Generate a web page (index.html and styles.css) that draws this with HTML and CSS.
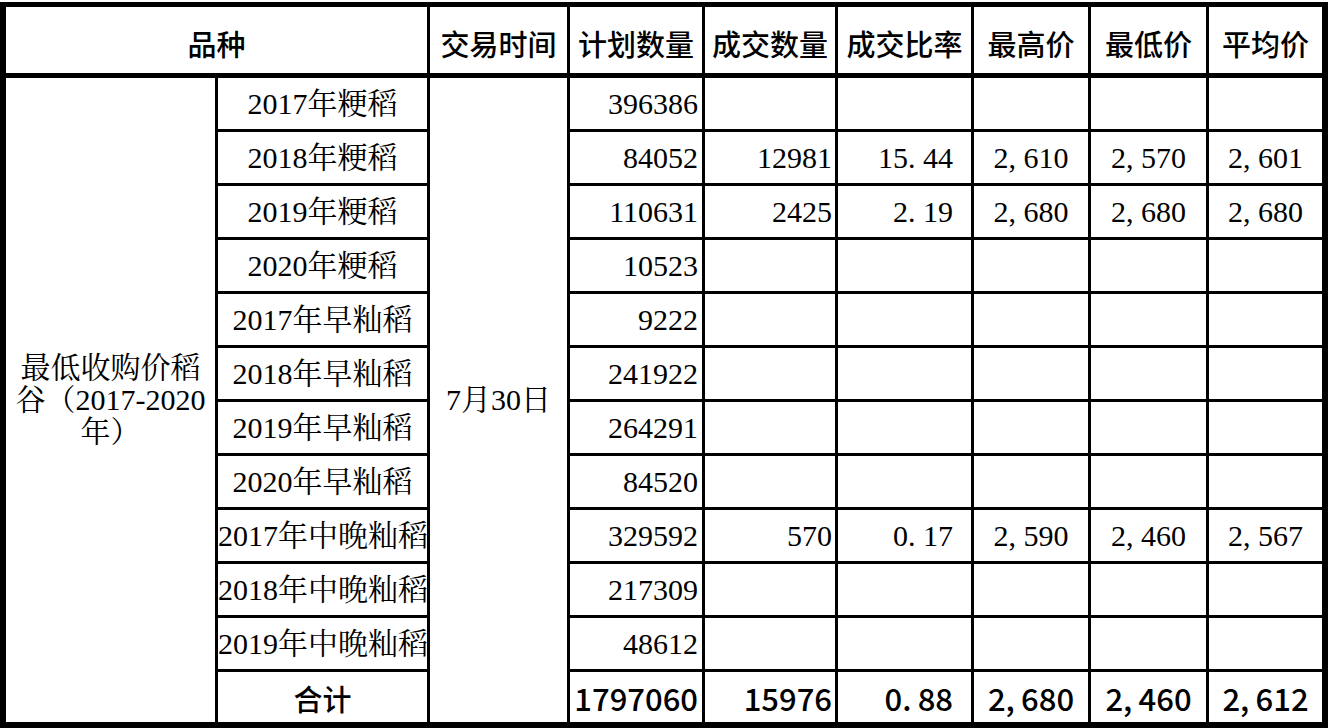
FILE: index.html
```html
<!DOCTYPE html>
<html>
<head>
<meta charset="utf-8">
<title>最低收购价稻谷交易结果</title>
<link rel="stylesheet" href="styles.css">
</head>
<body>
<table class="grid">
  <colgroup>
    <col class="w1"><col class="w2"><col class="w3"><col class="w4"><col class="w5"><col class="w6"><col class="w7"><col class="w8"><col class="w9">
  </colgroup>
  <tr class="hr">
    <th colspan="2">品种</th>
    <th>交易时间</th>
    <th>计划数量</th>
    <th>成交数量</th>
    <th>成交比率</th>
    <th>最高价</th>
    <th>最低价</th>
    <th class="last">平均价</th>
  </tr>
  <tr class="br">
    <td rowspan="12" class="span cat">最低收购价稻<br>谷（2017-2020<br>年）</td>
    <td class="name">2017年粳稻</td>
    <td rowspan="12" class="span date">7月30日</td>
    <td class="plan">396386</td>
    <td class="deal"></td>
    <td class="rate"></td>
    <td class="price"></td>
    <td class="price"></td>
    <td class="price last"></td>
  </tr>
  <tr class="br">
    <td class="name">2018年粳稻</td>
    <td class="plan">84052</td>
    <td class="deal">12981</td>
    <td class="rate">15<span class="wd">.</span>44</td>
    <td class="price">2<span class="wd">,</span>610</td>
    <td class="price">2<span class="wd">,</span>570</td>
    <td class="price last">2<span class="wd">,</span>601</td>
  </tr>
  <tr class="br">
    <td class="name">2019年粳稻</td>
    <td class="plan">110631</td>
    <td class="deal">2425</td>
    <td class="rate">2<span class="wd">.</span>19</td>
    <td class="price">2<span class="wd">,</span>680</td>
    <td class="price">2<span class="wd">,</span>680</td>
    <td class="price last">2<span class="wd">,</span>680</td>
  </tr>
  <tr class="br">
    <td class="name">2020年粳稻</td>
    <td class="plan">10523</td>
    <td class="deal"></td><td class="rate"></td><td class="price"></td><td class="price"></td><td class="price last"></td>
  </tr>
  <tr class="br">
    <td class="name">2017年早籼稻</td>
    <td class="plan">9222</td>
    <td class="deal"></td><td class="rate"></td><td class="price"></td><td class="price"></td><td class="price last"></td>
  </tr>
  <tr class="br">
    <td class="name">2018年早籼稻</td>
    <td class="plan">241922</td>
    <td class="deal"></td><td class="rate"></td><td class="price"></td><td class="price"></td><td class="price last"></td>
  </tr>
  <tr class="br">
    <td class="name">2019年早籼稻</td>
    <td class="plan">264291</td>
    <td class="deal"></td><td class="rate"></td><td class="price"></td><td class="price"></td><td class="price last"></td>
  </tr>
  <tr class="br">
    <td class="name">2020年早籼稻</td>
    <td class="plan">84520</td>
    <td class="deal"></td><td class="rate"></td><td class="price"></td><td class="price"></td><td class="price last"></td>
  </tr>
  <tr class="br">
    <td class="name">2017年中晚籼稻</td>
    <td class="plan">329592</td>
    <td class="deal">570</td>
    <td class="rate">0<span class="wd">.</span>17</td>
    <td class="price">2<span class="wd">,</span>590</td>
    <td class="price">2<span class="wd">,</span>460</td>
    <td class="price last">2<span class="wd">,</span>567</td>
  </tr>
  <tr class="br">
    <td class="name">2018年中晚籼稻</td>
    <td class="plan">217309</td>
    <td class="deal"></td><td class="rate"></td><td class="price"></td><td class="price"></td><td class="price last"></td>
  </tr>
  <tr class="br">
    <td class="name">2019年中晚籼稻</td>
    <td class="plan">48612</td>
    <td class="deal"></td><td class="rate"></td><td class="price"></td><td class="price"></td><td class="price last"></td>
  </tr>
  <tr class="tr">
    <td class="name total-label">合计</td>
    <td class="plan">1797060</td>
    <td class="deal">15976</td>
    <td class="rate">0<span class="wd">.</span>88</td>
    <td class="price">2<span class="wd">,</span>680</td>
    <td class="price">2<span class="wd">,</span>460</td>
    <td class="price last">2<span class="wd">,</span>612</td>
  </tr>
</table>
</body>
</html>
```

FILE: styles.css
```css
html, body {
  margin: 0;
  padding: 0;
  background: #fff;
}

body {
  padding-top: 2px;
  color: #000;
  font-family: "Liberation Serif", "Noto Serif CJK SC", serif;
  font-size: 30px;
}

.grid {
  box-sizing: border-box;
  width: 1328px;
  table-layout: fixed;
  border-collapse: separate;
  border-spacing: 0;
  border-style: solid;
  border-color: #000;
  border-width: 5px 6px 6px 6px;
  font-family: "Liberation Serif", "Noto Serif CJK SC", serif;
  font-size: 30px;
}

.w1 { width: 212px; }
.w2 { width: 212px; }
.w3 { width: 140px; }
.w4 { width: 135px; }
.w5 { width: 133px; }
.w6 { width: 136px; }
.w7 { width: 117px; }
.w8 { width: 118px; }
.w9 { width: 113px; }

.grid th,
.grid td {
  box-sizing: border-box;
  padding: 0;
  border-right: 3px solid #000;
  border-bottom: 3px solid #000;
  white-space: nowrap;
  vertical-align: middle;
}

.grid td {
  font-family: "Liberation Serif", "Noto Serif CJK SC", serif;
  font-size: 30px;
}

.grid th.last,
.grid td.last {
  border-right: 0;
}

.hr th {
  height: 71px;
  border-bottom-width: 5px;
  padding-top: 6px;
  font-family: "Noto Sans CJK SC", sans-serif;
  font-weight: 500;
  font-size: 29px;
  line-height: 32px;
  text-align: center;
}

.br td {
  height: 54px;
  line-height: 32px;
}

.grid .tr td {
  height: 50px;
  border-bottom: 0;
  line-height: 32px;
  font-family: "Noto Sans CJK SC", sans-serif;
  font-weight: 500;
  font-size: 31px;
  padding-top: 2px;
}

.grid td.span {
  border-bottom: 0;
  text-align: center;
  white-space: normal;
}

.cat {
  line-height: 37px;
  padding-top: 8px;
}

.date {
  padding-top: 6px;
}

.name {
  text-align: center;
}

.grid .tr td.total-label {
  font-size: 29px;
}

.grid td.plan {
  text-align: right;
  padding-right: 4px;
}

.grid td.deal {
  text-align: right;
  padding-right: 3px;
}

.grid td.rate {
  text-align: right;
  padding-right: 18px;
}

.price {
  text-align: center;
}

.wd {
  display: inline-block;
  width: 0.5em;
  text-align: left;
}
```
